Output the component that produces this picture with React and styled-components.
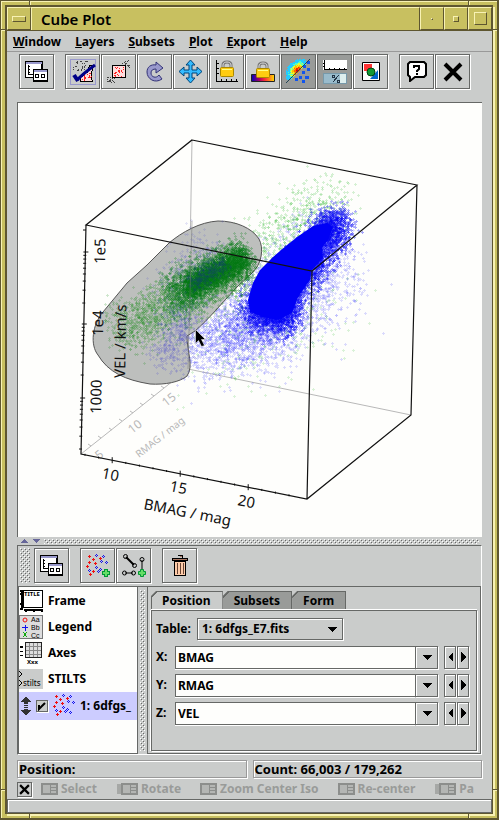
import React, { useState } from 'react';
import styled, { createGlobalStyle } from 'styled-components';

const grey = '#cacccb';
const dark = '#666866';
const olive = '#c8c060';
const oliveLight = '#f8f2b4';
const oliveDark = '#5e5630';
const uiFont = '"Noto Sans", "Open Sans", sans-serif';

const bumps = `url("data:image/svg+xml,%3Csvg xmlns='http://www.w3.org/2000/svg' width='4' height='4' shape-rendering='crispEdges'%3E%3Cpath fill='white' d='M0 0h1v1h-1zM2 2h1v1h-1z'/%3E%3Cpath fill='%23666' d='M1 1h1v1h-1zM3 3h1v1h-1z'/%3E%3C/svg%3E")`;

const GlobalStyle = createGlobalStyle`
    * { box-sizing: border-box; }
    body { margin: 0; background: ${grey}; }
    button, input, select { font: inherit; color: inherit; margin: 0; padding: 0; }
    svg { display: block; flex: none; }
`;

const WindowFrame = styled.div`
    position: relative;
    display: flex;
    flex-direction: column;
    min-height: 100vh;
    padding: 4px;
    background: ${olive};
    border: 1px solid ${oliveDark};
    border-right-width: 2px;
    border-bottom-width: 2px;
    box-shadow: inset 1px 1px 0 ${oliveLight};
    font: bold 13px/18px ${uiFont};
    color: #000;
    overflow: hidden;
`;

const FrameNotch = styled.i`
    position: absolute;
    z-index: 1;
    background: ${oliveDark};
    ${(p) => (p.$v ? 'width: 1px; height: 4px;' : 'width: 4px; height: 1px;')}
    ${(p) => p.$edge}: 0;
    ${(p) => p.$from}: 28px;
    box-shadow: ${(p) => (p.$v ? '1px 0' : '0 1px')} 0 ${oliveLight};
`;

const WindowBody = styled.div`
    flex: 1;
    display: flex;
    flex-direction: column;
    min-width: 0;
    background: ${grey};
    border: 1px solid ${oliveDark};
    border-top-width: 2px;
    border-left-width: 2px;
    box-shadow: 2px 2px 0 ${oliveLight};
`;

const TitleBar = styled.header`
    display: flex;
    height: 24px;
    background: ${olive};
    border-bottom: 1px solid ${oliveDark};
`;

const TitleButton = styled.button`
    display: flex;
    align-items: center;
    justify-content: center;
    width: 24px;
    background: ${olive};
    border: 1px solid ${oliveLight};
    border-right-color: ${oliveDark};
    border-bottom-color: ${oliveDark};
`;

const TitleMark = styled.span`
    width: ${(p) => p.$w}px;
    height: ${(p) => p.$h}px;
    border: 1px solid ${oliveLight};
    border-right-color: ${oliveDark};
    border-bottom-color: ${oliveDark};
`;

const Title = styled.h1`
    flex: 1;
    margin: 0;
    padding-left: 9px;
    font: 600 15px/22px ${uiFont};
    border: 1px solid ${oliveLight};
    border-right-color: ${oliveDark};
    border-bottom: 0;
`;

const MenuBar = styled.nav`
    display: flex;
    gap: 14px;
    height: 21px;
    padding: 2px 6px 0;
    border-bottom: 1px solid #999;
    font-size: 12px;
`;

const MenuButton = styled.button`
    background: none;
    border: 0;
    &::first-letter { text-decoration: underline; }
`;

const Tools = styled.div`
    display: flex;
    gap: 1px;
    padding: ${(p) => p.$pad};
`;

const Spacer = styled.span`
    width: 9px;
`;

const ToolButton = styled.button`
    display: flex;
    align-items: center;
    justify-content: center;
    width: 35px;
    height: 35px;
    background: ${(p) => (p.$on ? '#999b99' : grey)};
    border: 1px solid ${dark};
    box-shadow: inset 1px 1px 0 ${(p) => (p.$on ? '#999b99' : '#fff')}, 1px 1px 0 #fff;
`;

const Content = styled.main`
    flex: 1;
    display: flex;
    flex-direction: column;
    padding: 0 10px;
`;

const PlotPanel = styled.section`
    background: #fefefc;
    border: 1px solid ${dark};
    border-width: 1px 0 0 1px;
    svg { width: 100%; height: auto; }
`;

const SplitBar = styled.div`
    display: flex;
    align-items: center;
    gap: 4px;
    height: 8px;
    padding: 0 3px;
`;

const Bumps = styled.span`
    flex: 1;
    height: 5px;
    background: ${bumps};
`;

const Grip = styled.span`
    width: 10px;
    height: 35px;
    margin-right: 3px;
    background: ${bumps};
`;

const ControlPanel = styled.section`
    border: 1px solid ${dark};
    border-right-color: #fff;
    border-bottom-color: #fff;
`;

const Split = styled.div`
    display: grid;
    grid-template-columns: 120px 9px 1fr;
    height: 168px;
    border-top: 1px solid ${dark};
`;

const VerticalBumps = styled.span`
    width: 5px;
    margin: 3px 2px;
    background: ${bumps};
`;

const LayerList = styled.ul`
    margin: 0;
    padding: 1px 0 0;
    list-style: none;
    overflow: hidden;
    background: #fefefc;
    border: 1px solid ${dark};
    border-top: 0;
    box-shadow: inset -1px -1px 0 #fff;
`;

const LayerItem = styled.li`
    display: flex;
    align-items: center;
    gap: 5px;
    height: ${(p) => (p.$selected ? 28 : 26)}px;
    padding-left: ${(p) => (p.$selected ? 2 : 0)}px;
    white-space: nowrap;
    font-size: 12px;
    background: ${(p) => (p.$selected ? '#ccccff' : 'transparent')};
    label { display: flex; align-items: center; gap: 3px; }
`;

const CheckBox = styled.input`
    appearance: none;
    flex: none;
    width: 12px;
    height: 12px;
    border: 1px solid ${dark};
    box-shadow: 1px 1px 0 #fff;
    background: ${grey};
    &:checked { background: url("data:image/svg+xml,%3Csvg xmlns='http://www.w3.org/2000/svg' width='10' height='10'%3E%3Cpath d='M2 4v4L8 2' fill='none' stroke='black' stroke-width='2'/%3E%3C/svg%3E") ${grey}; }
`;

const TabPane = styled.div`
    display: flex;
    flex-direction: column;
    min-width: 0;
    padding: 4px 3px 2px;
    border: 1px solid ${dark};
    border-top: 0;
`;

const Tabs = styled.div`
    display: flex;
    height: 18px;
`;

const Tab = styled.button`
    padding: 0 11px 0 10px;
    font-size: 12px;
    line-height: 17px;
    border: 1px solid ${dark};
    border-width: 1px 1px 0 ${(p) => (p.$active ? 1 : 0)}px;
    background: linear-gradient(135deg, ${dark} 5px, ${(p) => (p.$active ? grey : '#999b99')} 5px) border-box;
    clip-path: polygon(5px 0, 100% 0, 100% 100%, 0 100%, 0 5px);
    &:not(:first-child) { padding-left: 11px; }
`;

const Form = styled.form`
    flex: 1;
    display: flex;
    flex-direction: column;
    gap: 4px;
    margin-top: 1px;
    padding: 6px 7px 0 3px;
    border: 1px solid ${dark};
    box-shadow: 0 -1px 0 #fff, -1px 0 0 #fff, 1px 1px 0 #fff;
    font-size: 12px;
`;

const Field = styled.div`
    display: flex;
    align-items: center;
    height: 24px;
    label { width: ${(p) => p.$label}px; padding-left: 1px; }
`;

const SelectBox = styled.span`
    position: relative;
    width: 146px;
    svg { position: absolute; right: 6px; top: 9px; pointer-events: none; }
`;

const Select = styled.select`
    appearance: none;
    width: 100%;
    height: 22px;
    padding-left: 4px;
    background: ${grey};
    border: 1px solid ${dark};
    border-radius: 0;
    box-shadow: inset 1px 1px 0 #fff, 1px 1px 0 #fff;
`;

const TextInput = styled.input`
    flex: 1;
    min-width: 0;
    height: 23px;
    padding-left: 2px;
    background: #fefefc;
    border: 1px solid ${dark};
    border-right: 0;
    box-shadow: 0 1px 0 #fff;
`;

const ArrowButton = styled.button`
    display: flex;
    align-items: center;
    justify-content: center;
    width: ${(p) => p.$w}px;
    height: 23px;
    margin-left: ${(p) => p.$gap || 0}px;
    background: ${grey};
    border: 1px solid ${dark};
    box-shadow: inset 1px 1px 0 #fff, 1px 1px 0 #fff;
`;

const StatusRow = styled.div`
    display: grid;
    grid-template-columns: 1fr 1fr;
    gap: 6px;
    padding: 5px 0 2px;
`;

const Status = styled.output`
    height: 18px;
    padding-left: 1px;
    line-height: 16px;
    border: 1px solid #999;
    box-shadow: inset 1px 1px 0 #fff, 1px 1px 0 #fff;
`;

const HintRow = styled.div`
    display: flex;
    align-items: center;
    gap: 9px;
    height: 18px;
    overflow: hidden;
    white-space: nowrap;
    font-size: 12px;
    color: #999b99;
`;

const CloseHints = styled.button`
    display: flex;
    flex: none;
    padding: 1px;
    background: ${grey};
    border: 1px solid ${dark};
    color: #000;
    box-shadow: 1px 1px 0 #fff;
`;

const Hint = styled.span`
    display: flex;
    flex: none;
    align-items: center;
    gap: 3px;
    margin-right: 10px;
    &:last-child { margin-right: 0; }
`;

const Progress = styled.div`
    height: 14px;
    border: 1px solid ${dark};
    box-shadow: inset 1px 1px 0 #fff;
`;

// small repeatable generator, so the cloud is the same on every load
const makeRandom = (seed) => {
    let s = seed;
    return () => {
        s = (s * 16807) % 2147483647;
        return s / 2147483647;
    };
};

const LAYERS = 8;

// points scattered round the segment (x1,y1)-(x2,y2)
const cloud = (seed, n, x1, y1, x2, y2, along, across) => {
    const rnd = makeRandom(seed);
    const gauss = () => rnd() + rnd() + rnd() + rnd() - 2;
    const len = Math.hypot(x2 - x1, y2 - y1);
    const ux = (x2 - x1) / len;
    const uy = (y2 - y1) / len;
    const paths = Array(LAYERS).fill('');
    for (let i = 0; i < n; i++) {
        const t = rnd() * len + gauss() * along;
        const w = gauss() * across;
        const x = Math.round(x1 + ux * t - uy * w);
        const y = Math.round(y1 + uy * t + ux * w);
        paths[i % LAYERS] += `M${x - 1} ${y}h3v1h-3zM${x} ${y - 1}h1v3h-1z`;
    }
    return paths;
};

const clouds = [
    { color: '#2222ff', opacity: 0.15, paths: cloud(11, 2400, 330, 245, 240, 345, 24, 38) },
    { color: '#2222ff', opacity: 0.16, paths: cloud(13, 1300, 275, 310, 200, 350, 24, 28) },
    { color: '#00aa00', opacity: 0.16, paths: cloud(14, 600, 335, 195, 250, 255, 24, 24) },
    { color: '#00aa00', opacity: 0.14, paths: cloud(15, 260, 330, 300, 200, 360, 40, 46) },
    { color: '#2222ff', opacity: 0.16, paths: cloud(16, 260, 350, 300, 180, 370, 30, 34) },
    { color: '#0000f6', opacity: 0.35, paths: cloud(12, 3600, 338, 222, 268, 316, 10, 17) },
    { color: '#0000f6', opacity: 0.35, paths: cloud(17, 1700, 294, 314, 250, 306, 12, 19) },
    { color: '#0000f6', opacity: 0.3, paths: cloud(18, 400, 346, 212, 320, 232, 8, 12) },
];

const blobClouds = [
    { color: '#118811', opacity: 0.2, paths: cloud(21, 1900, 240, 266, 120, 332, 14, 22) },
    { color: '#4444cc', opacity: 0.14, paths: cloud(22, 500, 215, 250, 175, 300, 16, 26) },
    { color: '#4444cc', opacity: 0.18, paths: cloud(23, 420, 190, 310, 165, 362, 12, 20) },
    { color: '#007711', opacity: 0.25, paths: cloud(24, 2200, 248, 258, 170, 296, 8, 19) },
    { color: '#007711', opacity: 0.3, paths: cloud(26, 2200, 244, 256, 188, 288, 8, 11) },
    { color: '#114466', opacity: 0.25, paths: cloud(25, 300, 225, 262, 190, 284, 6, 9) },
];

const Cloud = ({ data }) => (
    <>
        {data.map((c, i) => c.paths.map((d, j) => (
            <path key={`${i}-${j}`} d={d} fill={c.color} opacity={c.opacity} />
        )))}
    </>
);

const blob = 'M218 221C200 222 182 232 169 243L147 265L127 283L103 312C92 325 90 345 98 355C108 372 125 380 150 384C165 385 180 382 187 376C194 366 187 352 187 336L195 331C208 320 222 303 237 287L252 273C262 264 264 248 259 239C252 228 236 221 218 221Z';
const core = 'M327 223L313 226L300 235L287 245L273 257L260 270L253 283L248 300L250 312L263 317L277 320L292 313L298 297L310 280L312 270L323 258L322 248L328 240L333 227Z';

const bmagTicks = Array.from({ length: 16 }, (_, i) => {
    const x = 85 + i * 13.6;
    const y = 454.8 + i * 2.7;
    const m = i % 5 === 2 ? 3 : 1;
    return `M${x} ${y - m}v${m * 2}`;
}).join('');

const velTicks = [252, 324, 398].map((y) => (
    `M${86 - (y - 225) / 45 - 2} ${y}h5` + [2, 3, 4, 5, 6, 7, 8, 9].map((k) => {
        const ty = y + 73 * (1 - Math.log10(k));
        return ty < 452 ? `M${86 - (ty - 225) / 45 - 2} ${ty}h3` : '';
    }).join('')
)).join('') + 'M83 230h3';

const CubePlot = () => (
    <svg viewBox="18 103 464 434" role="img" aria-label="Cube Plot">
        <g fill="none" stroke="#b8b8b8">
            <path d="M192 140L188 369L81 454M188 369L411 415" />
            <path d="M91 446l-3 -2M101 438l-3 -2M112 430l-3 -2M122 421l-3 -2M133 413l-3 -2M143 405l-3 -2M154 396l-3 -2M164 388l-3 -2" />
        </g>
        <g fontFamily={uiFont} fontWeight="400" fontSize="12" fill="#b8b8b8">
            <text transform="translate(99 460) rotate(-38)">5</text>
            <text transform="translate(132 434) rotate(-38)">10</text>
            <text transform="translate(166 407) rotate(-38)">15</text>
            <text transform="translate(139 458) rotate(-38)" fontSize="10">RMAG / mag</text>
        </g>
        <g shapeRendering="crispEdges">
            <Cloud data={clouds} />
        </g>
        <path d={blob} fill="#bdbfbd" stroke="#555" />
        <g shapeRendering="crispEdges">
            <Cloud data={blobClouds} />
        </g>
        <path d={core} fill="#0000f6" />
        <path d="M192 221L188 369" stroke="#777" opacity="0.5" />
        <g fill="none" stroke="#111">
            <path d="M192 140L417 185L312 271L86 225ZM86 225L81 454L307 499L411 415L417 185M312 271L307 499" strokeWidth="1.2" />
            <path d={bmagTicks} />
            <path d={velTicks} />
        </g>
        <g fontFamily={uiFont} fontWeight="400" fontSize="15" fill="#111">
            <text transform="translate(101 478) rotate(11)">10</text>
            <text transform="translate(169 491) rotate(11)">15</text>
            <text transform="translate(237 505) rotate(11)">20</text>
            <text transform="translate(143 509) rotate(11)">BMAG / mag</text>
            <text transform="translate(105 264) rotate(-89)">1e5</text>
            <text transform="translate(103 336) rotate(-89)">1e4</text>
            <text transform="translate(101 414) rotate(-89)">1000</text>
            <text transform="translate(125 378) rotate(-89)">VEL / km/s</text>
        </g>
        <path d="M195.500 329.500v14l3 -3l3 6l3 -1l-3 -6h4z" fill="#000" stroke="#fff" strokeWidth="0.500" />
    </svg>
);

const Pixels = ({ w, h, children }) => (
    <svg width={w} height={h} viewBox={`0 0 ${w} ${h}`} shapeRendering="crispEdges" aria-hidden="true">{children}</svg>
);

const ControlIcon = () => (
    <Pixels w={23} h={21}>
        <path d="M0 0h18v17h-18z" />
        <path d="M1 3h15v13h-15z" fill="#fff" />
        <path d="M1 1h16v2h-16z" fill="#99c" />
        <path d="M3.500 4v10M3 13.500h5M3 5.500h2M3 8.500h2M3 11.500h2" stroke="#000" fill="none" />
        <path d="M8 8h15v13h-15z" />
        <path d="M9 11h13v8h-13z" fill="#fff" />
        <path d="M9 9h13v2h-13z" fill="#99c" />
        <path d="M10.500 13.500h3v3h-3zM16.500 13.500h3v3h-3z" fill="none" stroke="#000" />
    </Pixels>
);

const dots = (seed, n, x, y, w, h) => {
    const rnd = makeRandom(seed * 7919);
    let d = '';
    for (let i = 0; i < n; i++) d += `M${x + Math.floor(rnd() * w)} ${y + Math.floor(rnd() * h)}h1v1h-1z`;
    return d;
};

const SubsetIcon = () => (
    <Pixels w={26} h={26}>
        <path d="M0.500 0.500h25v25h-25z" fill="none" stroke="#99c" />
        <path d={dots(31, 34, 3, 2, 15, 10)} fill="#444" />
        <path d="M19.500 6.500h3v4l-1 3v5l1 4h-12v-4l3 -2l1 -3h3z" fill="#fdd" stroke="#000" />
        <path d={dots(38, 20, 12, 14, 10, 8)} fill="#f22" />
        <path d="M4 16L8 22" stroke="#000088" strokeWidth="4" shapeRendering="auto" />
        <path d="M7 21Q14 14 25 6" fill="none" stroke="#000088" strokeWidth="3" shapeRendering="auto" />
    </Pixels>
);

const RescaleIcon = () => (
    <Pixels w={24} h={24}>
        <path d={dots(33, 22, 15, 0, 8, 8) + dots(34, 22, 0, 17, 9, 6)} fill="#444" />
        <path d="M5.500 5.500h13v12h-13z" fill="#fdd" stroke="#000" />
        <path d={dots(35, 28, 7, 7, 11, 10)} fill="#f22" />
    </Pixels>
);

const RotateIcon = () => (
    <svg width="18" height="22" viewBox="0 0 18 22" aria-hidden="true">
        <path d="M16 18C9 23 1 18 1 11C1 6 5 3 10 4V1L17 7L10 12V8C7 8 5 9 5 12C5 16 10 18 13 14Z" fill="#9999cc" stroke="#333377" />
    </svg>
);

const MoveIcon = () => (
    <svg width="25" height="25" viewBox="0 0 25 25" aria-hidden="true">
        <path d="M12.500 1L17 6H14V11H19V8L24 12.500L19 17V14H14V19H17L12.500 24L8 19H11V14H6V17L1 12.500L6 8V11H11V6H8Z" fill="#3bf" stroke="#00457a" />
    </svg>
);

const Padlock = () => (
    <>
        <path d="M8 9V5C8 1 16 1 16 5V9" fill="none" stroke="#777" strokeWidth="3" />
        <path d="M8 9V5C8 1 16 1 16 5V9" fill="none" stroke="#ddd" />
        <rect x="5.500" y="7.500" width="13" height="9" rx="1" fill="#fc1" stroke="#a80" />
        <path d="M7 9.500h10" stroke="#ff8" />
    </>
);

const AxisLockIcon = () => (
    <svg width="23" height="23" viewBox="0 0 23 23" aria-hidden="true">
        <Padlock />
        <path d="M1.500 0v21.500h22M1 3.500h3M1 8.500h3M1 13.500h3M6.500 19v3M11.500 19v3M16.500 19v3M21.500 19v3" stroke="#000" fill="none" shapeRendering="crispEdges" />
    </svg>
);

const ColorLockIcon = () => (
    <svg width="24" height="22" viewBox="0 0 24 22" aria-hidden="true">
        <defs>
            <linearGradient id="ramp">
                <stop offset="0" stopColor="#00b" />
                <stop offset="0.350" stopColor="#a06" />
                <stop offset="0.600" stopColor="#f33" />
                <stop offset="1" stopColor="#fd0" />
            </linearGradient>
        </defs>
        <path d="M0.500 13.500h23v7h-23z" fill="url(#ramp)" stroke="#222" />
        <Padlock />
    </svg>
);

const heatColors = ['#d00', '#e20', '#f60', '#fb0', '#df3', '#5fb', '#2cf', '#2cf'];

const HeatIcon = () => {
    const cells = [];
    const rnd = makeRandom(4242);
    for (let y = 0; y < 24; y++) {
        for (let x = 0; x < 20; x++) {
            const jitter = rnd() * 2.5;
            // stretched along the rising diagonal
            const u = (x - y) / 1.414;
            const v = (x + y - 22) / 1.414;
            const r = Math.hypot(u * 0.7, v) + jitter;
            if (x + y < 25 && r < 11) cells.push([x, y, heatColors[Math.min(7, Math.floor(r / 1.3))]]);
        }
    }
    return (
        <Pixels w={25} h={25}>
            {cells.map(([x, y, c]) => <rect key={`${x}-${y}`} x={x} y={y} width="1" height="1" fill={c} />)}
            <path d="M21 2h3v3h-3zM17 6h3v3h-3zM21 9h3v3h-3zM16 12h3v3h-3zM13 17h3v3h-3zM19 17h4v3h-4zM16 21h3v3h-3zM9 19h3v3h-3z" fill="#15e" />
            <path d="M0 24L24 0" stroke="#245" />
        </Pixels>
    );
};

const SketchIcon = () => (
    <Pixels w={24} h={24}>
        <path d="M0 0h24v10h-24z" fill="#fff" />
        <path d="M1.500 0v9.500h22.500M0 3.500h2M0 6.500h2M6.500 8v2M11.500 8v2M16.500 8v2M21.500 8v2" stroke="#000" fill="none" />
        <path d="M0.500 13.500h23v10h-23z" fill="#dee" stroke="#79a" />
        <path d="M1 14h16v9h-16z" fill="#9bc" />
        <path d="M15.500 15.500l-6 7M9.500 15.500h2v2h-2zM14.500 20.500h2v2h-2z" stroke="#234" fill="none" />
    </Pixels>
);

const ShapesIcon = () => (
    <svg width="18" height="20" viewBox="0 0 18 20" aria-hidden="true">
        <path d="M0.500 0.500h17v18h-17z" fill="#fff" stroke="#000" />
        <path d="M2 2h8v7h-8z" fill="#f33" />
        <path d="M16 8v9h-8z" fill="#06c" />
        <circle cx="9" cy="10" r="4" fill="#193" stroke="#041" />
    </svg>
);

const HelpIcon = () => (
    <svg width="20" height="21" viewBox="0 0 20 21" aria-hidden="true">
        <path d="M3 1H17L19 3V14L17 16H8L3 20V16L1 14V3Z" fill="#fff" stroke="#000" strokeWidth="2" />
        <path d="M7 7V5H12V8L10 10V11M9 13h2" fill="none" stroke="#000" strokeWidth="2" />
    </svg>
);

const CrossIcon = ({ size, weight }) => (
    <svg width={size} height={size} viewBox="0 0 20 20" aria-hidden="true">
        <path d="M2 2L18 18M18 2L2 18" stroke="#000" strokeWidth={weight} fill="none" />
    </svg>
);

const PlusPath = () => (
    <path d="M18.500 15.500h3v2h2v3h-2v2h-3v-2h-2v-3h2z" fill="#6d6" stroke="#093" />
);

const MarksIcon = ({ add }) => (
    <Pixels w={24} h={24}>
        {[[3, 2], [7, 5], [3, 8], [9, 9], [1, 12], [7, 17], [4, 20], [14, 4]].map(([x, y]) => (
            <path key={`r${x}-${y}`} d={`M${x - 1} ${y}h3v1h-3zM${x} ${y - 1}h1v3h-1z`} fill="#e11" />
        ))}
        {[[10, 1], [17, 2], [15, 7], [20, 8], [10, 13], [14, 15], [3, 16], [12, 17], [17, 18]].map(([x, y]) => (
            <path key={`b${x}-${y}`} d={`M${x - 1} ${y}h1v1h-1zM${x + 1} ${y}h1v1h-1zM${x} ${y - 1}h1v1h-1zM${x} ${y + 1}h1v1h-1z`} fill="#11e" />
        ))}
        {add && <PlusPath />}
    </Pixels>
);

const LinksIcon = () => (
    <svg width="24" height="24" viewBox="0 0 24 24" aria-hidden="true">
        <g fill="none" stroke="#000">
            <path d="M4 3L12 11" strokeWidth="2" />
            <path d="M20 6V16M3 19H11" />
            <circle cx="3.500" cy="2.500" r="2" />
            <circle cx="12.500" cy="11.500" r="2" />
            <circle cx="20" cy="5.500" r="2" />
            <circle cx="2.500" cy="19" r="2" />
            <circle cx="11.500" cy="19" r="2" />
        </g>
        <PlusPath />
    </svg>
);

const TrashIcon = () => (
    <Pixels w={16} h={22}>
        <path d="M5.500 0.500h5v2M0.500 3.500h15v2h-15z" fill="#a87864" stroke="#000" />
        <path d="M2.500 6.500h11v14h-11z" fill="#fca" stroke="#000" />
        <path d="M5.500 8v11M8.500 8v11M11.500 8v11" stroke="#643" />
    </Pixels>
);

const FrameIcon = () => (
    <Pixels w={24} h={24}>
        <path d="M4.500 1.500h19v17h-19z" fill="#fff" stroke="#000" />
        <path d="M1 1.500h3M1 19.500h3M2.500 1v18M1 5h3M1 15h3M5 20.500h19M6.500 20v3M14.500 20v3M22.500 20v3" stroke="#000" strokeWidth="2" />
        <text x="5" y="7" fontSize="6" fontFamily={uiFont} fontWeight="bold">TITLE</text>
    </Pixels>
);

const LegendIcon = () => (
    <Pixels w={24} h={24}>
        <path d="M0.500 0.500h23v23h-23z" fill="#ddd" stroke="#777" />
        <circle cx="6" cy="5" r="2" fill="none" stroke="#e11" shapeRendering="auto" />
        <path d="M3 12.500h6M6.500 10v6" stroke="#11e" />
        <path d="M4 17l4 5M8 17l-4 5" stroke="#1a1" />
        <g fontSize="7" fontFamily='"Liberation Sans", sans-serif' fontWeight="400">
            <text x="12" y="7">Aa</text>
            <text x="12" y="15">Bb</text>
            <text x="12" y="23">Cc</text>
        </g>
    </Pixels>
);

const AxesIcon = () => (
    <Pixels w={24} h={24}>
        <path d="M6.500 1.500h16v15h-16z" fill="#ddd" stroke="#222" />
        <path d="M10.500 2v14M14.500 2v14M18.500 2v14M7 5.500h15M7 9.500h15M7 13.500h15" stroke="#888" />
        <path d="M1 5l3 2M1 7l3 -2M1 10l3 1M1 14l3 1" stroke="#000" />
        <text x="8" y="23" fontSize="6" fontFamily={uiFont} fontWeight="bold">Xxx</text>
    </Pixels>
);

const StiltsIcon = () => (
    <Pixels w={24} h={20}>
        <path d="M0 0h24v20h-24z" fill={grey} />
        <path d="M0 2l3 3l-3 3M0 11l3 3l-3 3" fill="none" stroke="#000" />
        <text x="4" y="17" fontSize="8" fontFamily={uiFont} fontWeight="400">stilts</text>
    </Pixels>
);

const DragIcon = () => (
    <Pixels w={10} h={20}>
        <path d="M5 0L10 6H7V8H3V6H0ZM3 9h4v1h-4zM3 11h4v1h-4zM3 13h4v1H10L5 20L0 14H3z" fill="#333" />
    </Pixels>
);

const MouseIcon = ({ wide }) => (
    <Pixels w={wide ? 22 : 17} h={12}>
        {wide && <path d="M1 1h5v10h-5z" fill="#a6a8a6" />}
        <g transform={wide ? 'translate(5 0)' : undefined}>
            <path d="M1 1h15v10h-15z" fill="#b4b6b4" stroke="#8c8e8c" strokeWidth="2" />
            <path d="M9 1v10M9 4h6M9 7h6" stroke="#8c8e8c" />
        </g>
    </Pixels>
);

const arrowPaths = { down: 'M0 0h10l-5 5z', left: 'M5 0v10l-5 -5z', right: 'M0 0v10l5 -5z' };

const Arrow = ({ dir }) => {
    const flat = dir === 'down';
    return <Pixels w={flat ? 10 : 5} h={flat ? 5 : 10}><path d={arrowPaths[dir]} /></Pixels>;
};

const tools = [
    ['Control', ControlIcon], null, ['Subset', SubsetIcon], ['Rescale', RescaleIcon], ['Replot', RotateIcon],
    ['Pan', MoveIcon], ['Lock axes', AxisLockIcon], ['Lock colours', ColorLockIcon], ['Density', HeatIcon, true],
    ['Sketch', SketchIcon, true], ['Legend', ShapesIcon], null, ['Help', HelpIcon],
    ['Close', () => <CrossIcon size={20} weight={4} />],
];

const layerTools = [
    ['Float', ControlIcon], null, ['Add marks', () => <MarksIcon add />], ['Add links', LinksIcon], null, ['Remove', TrashIcon],
];

const ToolBar = ({ items, pad, grip }) => (
    <Tools $pad={pad}>
        {grip && <Grip />}
        {items.map((item, i) => {
            if (!item) return <Spacer key={i} />;
            const [name, Icon, on] = item;
            return <ToolButton key={name} type="button" aria-label={name} $on={on}><Icon /></ToolButton>;
        })}
    </Tools>
);

const CoordField = ({ name, initial }) => {
    const [value, setValue] = useState(initial);
    return (
        <Field $label={20}>
            <label htmlFor={`coord${name}`}>{name}:</label>
            <TextInput id={`coord${name}`} value={value} onChange={(e) => setValue(e.target.value)} />
            <ArrowButton type="button" aria-label={`${name} columns`} $w={23}><Arrow dir="down" /></ArrowButton>
            <ArrowButton type="button" aria-label={`${name} previous`} $w={12} $gap={6}><Arrow dir="left" /></ArrowButton>
            <ArrowButton type="button" aria-label={`${name} next`} $w={12} $gap={1}><Arrow dir="right" /></ArrowButton>
        </Field>
    );
};

const hints = [['Select'], ['Rotate', true], ['Zoom Center Iso'], ['Re-center'], ['Pa', true]];

function App() {
    const [tab, setTab] = useState('Position');
    const [visible, setVisible] = useState(true);

    return (
        <>
            <GlobalStyle />
            <WindowFrame>
                <FrameNotch $v $edge="top" $from="left" />
                <FrameNotch $v $edge="top" $from="right" />
                <FrameNotch $edge="left" $from="top" />
                <FrameNotch $edge="right" $from="top" />
                <FrameNotch $v $edge="bottom" $from="left" />
                <FrameNotch $v $edge="bottom" $from="right" />
                <FrameNotch $edge="left" $from="bottom" />
                <FrameNotch $edge="right" $from="bottom" />
                <WindowBody>
                    <TitleBar>
                        <TitleButton type="button" aria-label="Window menu"><TitleMark $w={14} $h={6} /></TitleButton>
                        <Title>Cube Plot</Title>
                        <TitleButton type="button" aria-label="Lower"><TitleMark $w={2} $h={2} /></TitleButton>
                        <TitleButton type="button" aria-label="Minimise"><TitleMark $w={6} $h={6} /></TitleButton>
                        <TitleButton type="button" aria-label="Maximise"><TitleMark $w={13} $h={13} /></TitleButton>
                    </TitleBar>
                    <MenuBar>
                        {['Window', 'Layers', 'Subsets', 'Plot', 'Export', 'Help'].map((m) => (
                            <MenuButton key={m} type="button">{m}</MenuButton>
                        ))}
                    </MenuBar>
                    <ToolBar items={tools} pad="2px 12px 13px" />
                    <Content>
                        <PlotPanel><CubePlot /></PlotPanel>
                        <SplitBar>
                            <Pixels w={8} h={4}><path d="M0 4h8l-4 -4z" fill="#669" /></Pixels>
                            <Pixels w={8} h={4}><path d="M0 0h8l-4 4z" fill="#669" /></Pixels>
                            <Bumps />
                        </SplitBar>
                        <ControlPanel>
                            <ToolBar items={layerTools} pad="2px 2px 3px" grip />
                            <Split>
                                <LayerList>
                                    <LayerItem><FrameIcon />Frame</LayerItem>
                                    <LayerItem><LegendIcon />Legend</LayerItem>
                                    <LayerItem><AxesIcon />Axes</LayerItem>
                                    <LayerItem><StiltsIcon />STILTS</LayerItem>
                                    <LayerItem $selected>
                                        <DragIcon />
                                        <CheckBox id="layer1" type="checkbox" checked={visible} onChange={(e) => setVisible(e.target.checked)} />
                                        <label htmlFor="layer1"><MarksIcon />1: 6dfgs_</label>
                                    </LayerItem>
                                </LayerList>
                                <VerticalBumps />
                                <TabPane>
                                    <Tabs role="tablist">
                                        {['Position', 'Subsets', 'Form'].map((t) => (
                                            <Tab key={t} type="button" role="tab" aria-selected={t === tab} $active={t === tab} onClick={() => setTab(t)}>{t}</Tab>
                                        ))}
                                    </Tabs>
                                    <Form>
                                        <Field $label={42}>
                                            <label htmlFor="table">Table:</label>
                                            <SelectBox>
                                                <Select id="table"><option>1: 6dfgs_E7.fits</option></Select>
                                                <Arrow dir="down" />
                                            </SelectBox>
                                        </Field>
                                        <CoordField name="X" initial="BMAG" />
                                        <CoordField name="Y" initial="RMAG" />
                                        <CoordField name="Z" initial="VEL" />
                                    </Form>
                                </TabPane>
                            </Split>
                        </ControlPanel>
                        <StatusRow>
                            <Status>Position:</Status>
                            <Status>Count: 66,003 / 179,262</Status>
                        </StatusRow>
                        <HintRow>
                            <CloseHints type="button" aria-label="Hide hints"><CrossIcon size={11} weight={4} /></CloseHints>
                            {hints.map(([h, wide]) => (
                                <Hint key={h}><MouseIcon wide={wide} />{h}</Hint>
                            ))}
                        </HintRow>
                    </Content>
                    <Progress />
                </WindowBody>
            </WindowFrame>
        </>
    );
}

export default App;
